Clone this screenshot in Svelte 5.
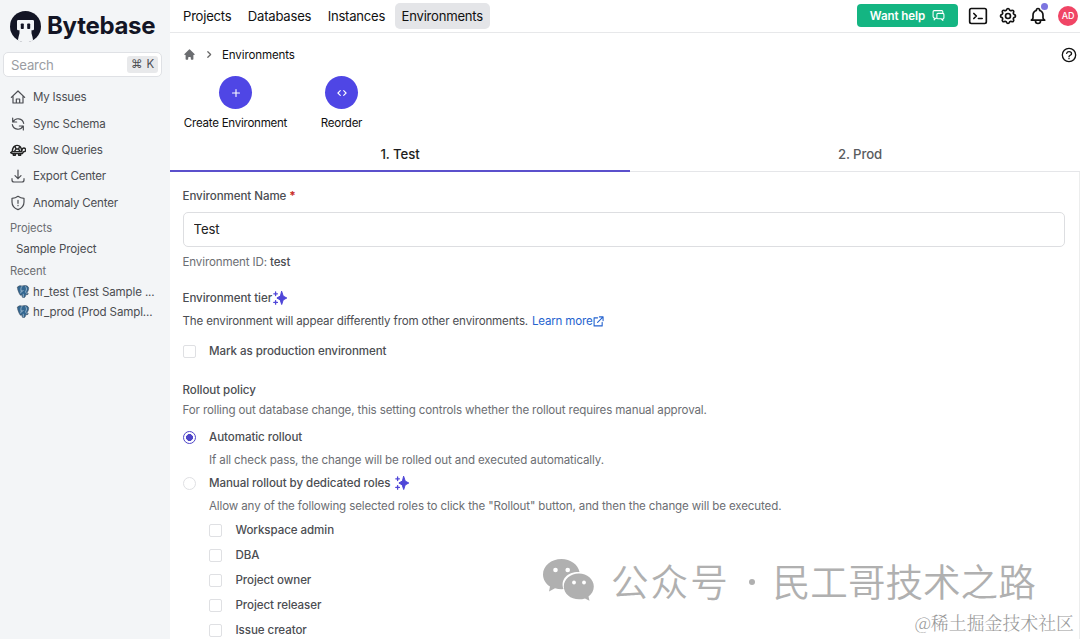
<script>
  let searchText = ""
  let activeTab = 0
  let environmentName = "Test"
  let rollout = "auto"

  const menu = [
    { icon: "home", label: "My Issues" },
    { icon: "sync", label: "Sync Schema" },
    { icon: "turtle", label: "Slow Queries" },
    { icon: "download", label: "Export Center" },
    { icon: "shield", label: "Anomaly Center" },
  ]
  const recent = ["hr_test (Test Sample ...", "hr_prod (Prod Sampl..."]
  const nav = ["Projects", "Databases", "Instances", "Environments"]
  const tabs = ["1. Test", "2. Prod"]
  const roles = ["Workspace admin", "DBA", "Project owner", "Project releaser", "Issue creator"]
</script>

{#snippet sparkles()}
  <svg class="sparkles" viewBox="0 0 14 14">
    <path d="M8.7 .5 10.200 5.100 13.8 7 10.200 8.900 8.7 13.5 7.2 8.900 3.9 7 7.2 5.100z" stroke-width="1" stroke-linejoin="round" />
    <path d="M2.600 1v3.600M.8 2.800h3.600M2.600 9.600v3.600M.8 11.400h3.600" stroke-width="1.3" />
  </svg>
{/snippet}

<div class="page">
  <aside>
    <div class="logo">
      <svg viewBox="0 0 31 31">
        <circle cx="15.5" cy="15.5" r="15.5" fill="#131525" />
        <path d="M7 10.200q0-1.2 1.2-1.2h14.6q1.200 0 1.200 1.200v7.700q0 1.300-1.300 1.300H21.500v3l1 3.800.6 3.600Q15.500 33 7.900 29.600l.6-3.600 1-3.800v-3H8.300Q7 19.200 7 17.900z" fill="#f3f5f7" />
        <rect x="10.800" y="12.500" width="3" height="5.500" rx=".8" fill="#131525" />
        <rect x="17.200" y="12.500" width="3" height="5.500" rx=".8" fill="#131525" />
      </svg>
      <span>Bytebase</span>
    </div>

    <div class="search">
      <input type="text" placeholder="Search" bind:value={searchText} />
      <kbd>⌘ K</kbd>
    </div>

    <nav class="menu">
      {#each menu as item}
        <div class="menu-item">
          {#if item.icon == "turtle"}
            <svg class="turtle" viewBox="0 0 24 20">
              <path d="M3.500 12.500C3.500 6.500 6.500 3 10.500 3s7 3.500 7 9.500zM7.500 4.500l1.500 4h4l1.500-4M9 8.500l-2.500 4M13 8.500l2 4" />
              <path d="M17 12.500c1-3 1-5.500 3.500-5.500 2 0 3 1.500 3 3s-1.500 2.500-3 2.500l-2 3H3.500L1 14l2.500-1.500h14M5 15.500v2.300h3v-2.300M13 15.500v2.300h3v-2.300" />
            </svg>
          {:else}
            <svg viewBox="0 0 24 24">
              {#if item.icon == "home"}
                <path d="M2 12.500 12 3l10 9.500M4.500 10.500V21h15V10.500M9.500 21v-6h5v6" />
              {:else if item.icon == "sync"}
                <path d="M4 3v6h6M20 21v-6h-6M4.500 9A8.500 8.500 0 0 1 20.500 11M19.500 15A8.500 8.500 0 0 1 3.500 13" />
              {:else if item.icon == "download"}
                <path d="M12 3v13M7.500 11.500 12 16l4.500-4.500M3 16v2a3 3 0 0 0 3 3h12a3 3 0 0 0 3-3v-2" />
              {:else}
                <path d="M12 2c2.500 2 5.500 3 9 3v5.500c0 5.500-3.500 9.500-9 11.500-5.500-2-9-6-9-11.500V5c3.500 0 6.500-1 9-3zM12 8v4.500M12 15.500v.5" />
              {/if}
            </svg>
          {/if}
          <span>{item.label}</span>
        </div>
      {/each}
    </nav>

    <div class="group">Projects</div>
    <div class="project">Sample Project</div>
    <div class="group recent">Recent</div>
    {#each recent as db}
      <div class="database">
        <svg viewBox="0 0 24 24">
          <path d="M2 4C4 .5 8 1 10 2c3-1.500 10-1.500 12 2 1.500 3-1 8-3 11l3 1c-1 2-3 2-5 2-.5 3-1 5.500-4 5.500-2.500 0-3-2-3-5.500-2 2-3.500.5-4.500-1.500C4 13 1 7 2 4z" fill="#336791" stroke="#3b4b5a" stroke-width="1" />
          <path d="M10 2.500C7.500 5 8 9 8.500 11c.5 2 0 4-1.500 4M17 3c2 3 2 6 0 8.500 0 2 .5 3 1.500 4M12.500 17v5M9 11c1.500 1 3 .5 3.500-1" fill="none" stroke="#c6d9e6" stroke-width="1.200" />
        </svg>
        <span>{db}</span>
      </div>
    {/each}
  </aside>

  <main>
    <header>
      <nav class="top-nav">
        {#each nav as link}
          <span class="nav-link" class:current={link == "Environments"}>{link}</span>
        {/each}
      </nav>
      <div class="tools">
        <button class="help">
          Want help
          <svg viewBox="0 0 24 24">
            <path d="M8 17H7l-3 3v-4a2 2 0 0 1-2-2V5a2 2 0 0 1 2-2h14a2 2 0 0 1 2 2v2M11 8h9a2 2 0 0 1 2 2v6a2 2 0 0 1-2 2v3l-3-3h-6a2 2 0 0 1-2-2v-6a2 2 0 0 1 2-2z" />
          </svg>
        </button>
        <svg class="terminal" viewBox="0 0 24 24">
          <path d="m7 9 3 3-3 3M12.500 15H17M4 21h16a2 2 0 0 0 2-2V5a2 2 0 0 0-2-2H4a2 2 0 0 0-2 2v14a2 2 0 0 0 2 2z" />
        </svg>
        <svg class="gear" viewBox="0 0 24 24">
          <path d="M10.325 4.317c.426-1.756 2.924-1.756 3.350 0a1.724 1.724 0 0 0 2.573 1.066c1.543-.94 3.310.826 2.370 2.370a1.724 1.724 0 0 0 1.065 2.572c1.756.426 1.756 2.924 0 3.350a1.724 1.724 0 0 0-1.066 2.573c.94 1.543-.826 3.310-2.370 2.370a1.724 1.724 0 0 0-2.572 1.065c-.426 1.756-2.924 1.756-3.350 0a1.724 1.724 0 0 0-2.573-1.066c-1.543.94-3.310-.826-2.370-2.370a1.724 1.724 0 0 0-1.065-2.572c-1.756-.426-1.756-2.924 0-3.350a1.724 1.724 0 0 0 1.066-2.573c-.94-1.543.826-3.310 2.370-2.370.996.608 2.296.07 2.572-1.065z" />
          <circle cx="12" cy="12" r="3" />
        </svg>
        <div class="bell">
          <svg viewBox="0 0 24 24">
            <path d="M15 17h5l-1.405-1.405A2.032 2.032 0 0 1 18 14.158V11a6 6 0 0 0-4-5.659V5a2 2 0 1 0-4 0v.341C7.670 6.165 6 8.388 6 11v3.159c0 .538-.214 1.055-.595 1.436L4 17h5m6 0v1a3 3 0 1 1-6 0v-1m6 0H9" />
          </svg>
          <i></i>
        </div>
        <div class="avatar">AD</div>
      </div>
    </header>

    <div class="breadcrumb">
      <svg class="house" viewBox="0 0 20 20">
        <path d="M10.700 2.300a1 1 0 0 0-1.400 0l-7 7a1 1 0 0 0 1.400 1.400l.3-.3V17a1 1 0 0 0 1 1h2a1 1 0 0 0 1-1v-2a1 1 0 0 1 1-1h2a1 1 0 0 1 1 1v2a1 1 0 0 0 1 1h2a1 1 0 0 0 1-1v-6.600l.3.3a1 1 0 0 0 1.400-1.400z" />
      </svg>
      <svg class="chevron" viewBox="0 0 8 8"><path d="m2.500 1.500 2.500 2.500-2.500 2.500" /></svg>
      <span>Environments</span>
      <svg class="question" viewBox="0 0 24 24">
        <circle cx="12" cy="12" r="10" />
        <path d="M8.500 9.500C9 7.800 10.300 7 12 7c2.200 0 3.800 1.200 3.800 3 0 2.500-3.800 2.300-3.800 4.500M12 17v.5" />
      </svg>
    </div>

    <div class="actions">
      <div class="action">
        <button aria-label="Create"><svg viewBox="0 0 10 10"><path d="M5 1.500v7M1.500 5h7" /></svg></button>
        <span>Create Environment</span>
      </div>
      <div class="action">
        <button aria-label="Reorder"><svg viewBox="0 0 10 10"><path d="M3.300 2.700.9 5l2.400 2.300M6.700 2.700 9.100 5 6.700 7.300" /></svg></button>
        <span>Reorder</span>
      </div>
    </div>

    <div class="tabs">
      {#each tabs as tab, i}
        <button class="tab" class:active={activeTab == i} on:click={() => (activeTab = i)}>{tab}</button>
      {/each}
    </div>

    <form>
      <div class="row label name"><span>Environment Name</span> <b class="required">*</b></div>
      <input class="name-input" type="text" bind:value={environmentName} />
      <div class="row hint id">Environment ID: <b>test</b></div>

      <div class="row label tier"><span>Environment tier</span>{@render sparkles()}</div>
      <div class="row text">
        <span>The environment will appear differently from other environments.</span>
        <span class="link">Learn more</span>
        <svg class="external" viewBox="0 0 12 12"><path d="M5 2H1.200v8.800H10V7M7 1h4v4M11 1 5 7" /></svg>
      </div>
      <label class="row option production"><input type="checkbox" />Mark as production environment</label>

      <div class="row label policy">Rollout policy</div>
      <div class="row hint">For rolling out database change, this setting controls whether the rollout requires manual approval.</div>
      <label class="row option auto"><input type="radio" value="auto" bind:group={rollout} />Automatic rollout</label>
      <div class="row hint nested">If all check pass, the change will be rolled out and executed automatically.</div>
      <label class="row option"><input type="radio" value="manual" bind:group={rollout} />Manual rollout by dedicated roles {@render sparkles()}</label>
      <div class="row hint nested">Allow any of the following selected roles to click the "Rollout" button, and then the change will be executed.</div>
      <div class="roles">
        {#each roles as role}
          <label class="option"><input type="checkbox" />{role}</label>
        {/each}
      </div>
    </form>
  </main>

  <div class="watermark">
    <svg viewBox="0 0 52 42">
      <path d="M18.500 0C8.300 0 0 6.800 0 15.500c0 5 2.700 9.200 7 12L6 32.500l6-3.200q3.500 1 8.500.8C17 20 25 12.500 36.500 13 35 5.500 27.500 0 18.500 0z" />
      <path d="M36 14.500c-8.500 0-15.200 5.800-15.200 13S27.500 40.300 36 40.300q3.200 0 6-.9l4.500 2.400-1-4.300c3.200-2.400 5.300-5.900 5.300-10 0-7.200-6.700-13-14.800-13z" />
      <g fill="#fff"><circle cx="12.500" cy="11" r="2.300" /><circle cx="24.700" cy="11" r="2.300" /><circle cx="31" cy="23.500" r="1.900" /><circle cx="41" cy="23.500" r="1.900" /></g>
    </svg>
    <span class="account">公众号</span>
    <span class="dot"></span>
    <span class="author">民工哥技术之路</span>
  </div>
  <div class="community">@稀土掘金技术社区</div>
</div>

<style>
  :global(body) {
    background: #fff;
    overflow: hidden;
  }
  .page {
    position: relative;
    display: flex;
    width: 1080px;
    height: 639px;
    overflow: hidden;
    font-family: Inter, "Noto Sans CJK SC", sans-serif;
    font-size: 11.56px;
    letter-spacing: -0.12px;
    color: #4b4d52;
  }
  .page * {
    box-sizing: border-box;
  }
  svg {
    display: block;
    flex: none;
    fill: none;
    stroke: currentColor;
    stroke-width: 2;
    stroke-linecap: round;
    stroke-linejoin: round;
  }
  button,
  input,
  kbd {
    font-family: inherit;
  }
  button {
    border: none;
    padding: 0;
  }

  aside {
    width: 169px;
    flex: none;
    background: #f3f5f7;
    white-space: nowrap;
  }
  .logo {
    display: flex;
    align-items: center;
    gap: 6px;
    height: 52px;
    padding-left: 10px;
    color: #131525;
    font-size: 24px;
    font-weight: 700;
    letter-spacing: -0.3px;
  }
  .logo span {
    margin-top: -2px;
  }
  .logo svg {
    width: 31px;
    height: 31px;
    stroke: none;
  }
  .search {
    display: flex;
    align-items: center;
    width: 159px;
    height: 25px;
    margin-left: 3px;
    padding: 0 3px 0 7px;
    background: #fff;
    border: 1px solid #dfe1e5;
    border-radius: 5px;
  }
  .search input {
    flex: 1;
    min-width: 0;
    padding: 0;
    border: none;
    outline: none;
    background: none;
    font-size: 13.2px;
    letter-spacing: -0.2px;
  }
  .search input::placeholder {
    color: #9a9ca2;
  }
  kbd {
    padding: 0 4px;
    border-radius: 3px;
    background: #e8e9eb;
    font-size: 11.5px;
    line-height: 17px;
    word-spacing: 1px;
  }
  .menu {
    padding-top: 7px;
    letter-spacing: -0.2px;
  }
  .menu-item {
    display: flex;
    align-items: center;
    height: 26.4px;
    padding-left: 10px;
    gap: 7px;
  }
  .menu-item svg {
    width: 16px;
    height: 16px;
    stroke-width: 1.8;
  }
  .menu-item .turtle {
    height: 14px;
    color: #222;
    stroke-width: 2.1;
  }
  .group {
    padding-left: 10px;
    margin-top: 1px;
    color: #6b6d72;
    font-size: 11.2px;
    line-height: 22px;
  }
  .recent {
    margin: 0;
  }
  .project {
    padding-left: 16px;
    line-height: 21px;
  }
  .database {
    display: flex;
    align-items: center;
    gap: 3px;
    height: 20px;
    padding-left: 16px;
  }
  .database svg {
    width: 14px;
    height: 13px;
  }

  main {
    flex: 1;
    min-width: 0;
    border-left: 1px solid #f3f5f7;
  }
  header {
    display: flex;
    justify-content: space-between;
    height: 33px;
    border-bottom: 1px solid #e7e8ea;
  }
  .top-nav {
    display: flex;
    gap: 2.4px;
    padding: 3px 0 3px 6px;
    color: #111;
    font-size: 13.1px;
    letter-spacing: -0.23px;
    line-height: 26px;
  }
  .nav-link {
    padding: 0 7px;
    border-radius: 5px;
  }
  .current {
    background: #e4e5e8;
  }
  .tools {
    display: flex;
    align-items: center;
    gap: 10px;
    padding: 0 2px 1px 0;
    color: #111;
  }
  .help {
    display: flex;
    align-items: center;
    justify-content: center;
    gap: 7px;
    width: 101px;
    height: 23px;
    border-radius: 4px;
    background: #14b582;
    color: #fff;
    font-size: 11.6px;
    font-weight: 600;
    letter-spacing: -0.1px;
  }
  .help svg {
    width: 13px;
    height: 13px;
  }
  .terminal,
  .gear,
  .bell svg {
    width: 20px;
    height: 20px;
  }
  .bell {
    position: relative;
  }
  .bell i {
    position: absolute;
    top: -3px;
    right: 0;
    width: 7px;
    height: 7px;
    border-radius: 50%;
    background: #7c75e0;
  }
  .avatar {
    width: 20px;
    height: 20px;
    border-radius: 50%;
    background: #f04565;
    color: #fff;
    font-size: 9px;
    font-weight: 500;
    line-height: 20px;
    text-align: center;
  }

  .breadcrumb {
    display: flex;
    align-items: center;
    height: 43px;
    padding: 0 3px 0 13px;
    color: #111;
  }
  .house {
    width: 13px;
    height: 13px;
    margin-right: 9px;
    fill: #6b6d70;
    stroke: none;
  }
  .chevron {
    width: 9px;
    height: 9px;
    margin-right: 8px;
    color: #666;
    stroke-width: 1.1;
  }
  .question {
    width: 16px;
    height: 16px;
    margin-left: auto;
  }
  .actions {
    display: flex;
    height: 61px;
    padding-left: 12.500px;
    color: #111;
    white-space: nowrap;
  }
  .action {
    display: flex;
    flex-direction: column;
    align-items: center;
    gap: 4px;
    width: 106px;
    line-height: 20px;
    letter-spacing: -0.25px;
  }
  .action button {
    display: grid;
    place-items: center;
    flex: none;
    width: 33px;
    height: 33px;
    border-radius: 50%;
    background: #4f46e5;
    color: #fff;
  }
  .action svg {
    width: 10px;
    height: 10px;
    stroke-width: 1.1;
  }
  .tabs {
    display: flex;
    height: 35px;
    border-bottom: 1px solid #e5e6e9;
  }
  .tab {
    width: 460px;
    flex: none;
    height: 35px;
    padding-top: 1px;
    border-bottom: 2px solid transparent;
    background: none;
    color: #5a5c60;
    font-size: 13.2px;
    font-weight: 500;
    letter-spacing: -0.1px;
  }
  .tab.active {
    border-color: #5b50cc;
    color: #1d1d20;
  }

  form {
    height: 467px;
    padding: 14px 14px 0 12.500px;
    border-right: 1px solid #eceded;
  }
  .row {
    display: flex;
    align-items: center;
    height: 20px;
    white-space: nowrap;
  }
  .label,
  .option {
    font-weight: 500;
    letter-spacing: -0.06px;
  }
  .required {
    margin-left: 3px;
    color: #c9302c;
  }
  .name-input {
    display: block;
    width: 882.500px;
    height: 35px;
    margin-top: 6px;
    padding: 0 10px 1px;
    border: 1px solid #dddee1;
    border-radius: 5px;
    outline: none;
    color: #222;
    font-size: 13.2px;
    letter-spacing: -0.1px;
  }
  .hint {
    color: #6c6e73;
  }
  .id {
    margin-top: 5px;
  }
  .id b {
    margin-left: 3px;
    color: #4b4d52;
    font-weight: 500;
  }
  .tier {
    margin-top: 16px;
  }
  .sparkles {
    width: 14px;
    height: 14px;
    margin-left: 1px;
    color: #4f46d8;
    stroke-width: 1;
  }
  .sparkles path:first-child {
    fill: currentColor;
  }
  .text {
    margin-top: 3px;
    letter-spacing: -0.14px;
  }
  .link {
    margin-left: 4px;
    color: #2563cf;
    letter-spacing: -0.2px;
  }
  .external {
    width: 11px;
    height: 11px;
    margin-left: 1px;
    color: #2563cf;
    stroke-width: 1.2;
  }
  .production {
    margin-top: 10px;
  }
  .policy {
    margin-top: 19px;
  }
  .auto {
    margin-top: 7px;
  }
  .nested {
    margin: 3px 0;
    padding-left: 26.500px;
  }
  .option input {
    appearance: none;
    flex: none;
    width: 13px;
    height: 13px;
    margin: 0 13.500px 0 0;
    border: 1px solid #dfe0e3;
    border-radius: 2px;
    background: #fff;
  }
  .option input[type="radio"] {
    border-radius: 50%;
  }
  .option input[type="radio"]:checked {
    border-color: #4f46c8;
    background: radial-gradient(circle, #4f46c8 3.2px, #fff 3.7px);
  }
  .option .sparkles {
    margin-left: 5px;
  }
  .roles {
    display: grid;
    grid-auto-rows: 25.1px;
    margin-top: -2px;
    padding-left: 26.500px;
  }
  .roles .option {
    display: flex;
    align-items: center;
  }
  .roles input {
    margin-top: 1px;
  }

  .watermark {
    position: absolute;
    left: 543px;
    top: 559px;
    display: flex;
    align-items: center;
    height: 42px;
    color: #b0b0b0;
    font-family: "Noto Sans CJK SC", sans-serif;
    font-size: 37.6px;
    font-weight: 350;
    letter-spacing: 0;
    line-height: 42px;
    white-space: nowrap;
  }
  .watermark svg {
    width: 52px;
    height: 42px;
    margin-right: 16px;
    fill: currentColor;
    stroke: none;
  }
  .account {
    letter-spacing: 2px;
  }
  .dot {
    width: 6px;
    height: 6px;
    margin: 4px 18px 0 19px;
    border-radius: 50%;
    background: #b0b0b0;
  }
  .community {
    position: absolute;
    right: 6px;
    top: 610px;
    color: #999;
    font-family: "Noto Serif CJK SC", "Noto Sans CJK SC", serif;
    font-size: 17.9px;
    font-weight: 300;
    letter-spacing: 0;
    line-height: 24px;
  }
</style>
